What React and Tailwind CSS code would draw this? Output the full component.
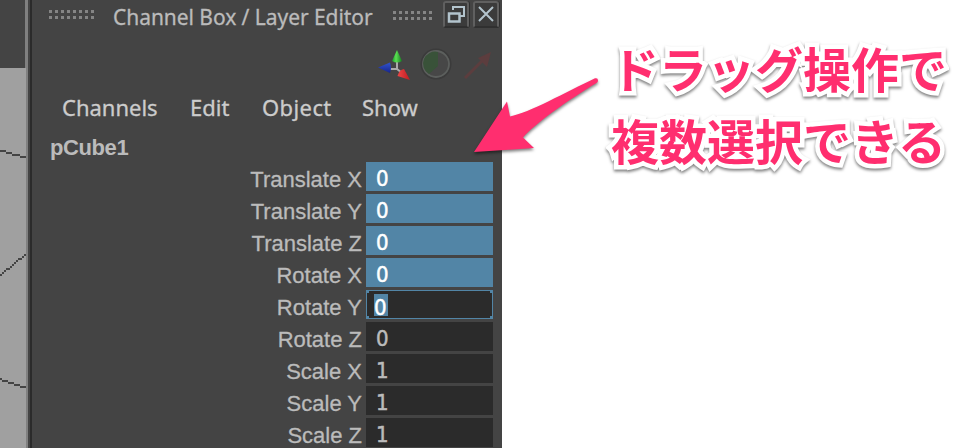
import React from "react";

const channels = [
  { label: "Translate X", value: "0", state: "selected" },
  { label: "Translate Y", value: "0", state: "selected" },
  { label: "Translate Z", value: "0", state: "selected" },
  { label: "Rotate X", value: "0", state: "selected" },
  { label: "Rotate Y", value: "0", state: "editing" },
  { label: "Rotate Z", value: "0", state: "idle" },
  { label: "Scale X", value: "1", state: "idle" },
  { label: "Scale Y", value: "1", state: "idle" },
  { label: "Scale Z", value: "1", state: "idle" },
];

function Grip({ columns }) {
  return (
    <div className="flex gap-[3px]">
      {Array.from({ length: columns }, (_, i) => (
        <div key={i} className="flex flex-col gap-[3px]">
          <i className="size-[3px] bg-[#858585]" />
          <i className="size-[3px] bg-[#858585]" />
        </div>
      ))}
    </div>
  );
}

function Viewport() {
  return (
    <div className="flex h-full w-[26px] shrink-0 flex-col">
      <div className="h-[68px] w-[25px] shrink-0 bg-[#444]" />
      <svg className="h-[380px] w-[26px] bg-[#a0a0a0]" viewBox="0 68 26 380" shapeRendering="crispEdges" fill="none" stroke="#444" strokeWidth="2">
        <path d="M0 151H6M6 153H12M12 155H20M20 157H26" />
        <path d="M0 275H2M2 273H4M4 271H6M6 269H10M10 267H12M12 265H14M14 263H16M16 261H18M18 259H22M22 257H24M24 255H26" />
        <path d="M0 379H2M2 381H8M8 383H14M14 385H20M20 387H26" />
      </svg>
    </div>
  );
}

function TitleButton({ children }) {
  return (
    <div className="h-[27px] w-[26px] rounded-[3px] border-2 border-[#606060] border-b-[#303030] bg-[#3b3b3b] shadow-[1px_0_0_#303030]">
      <svg className="size-[22px]" viewBox="0 0 22 22" fill="none" stroke="#b3c4cd">
        {children}
      </svg>
    </div>
  );
}

function TitleBar() {
  return (
    <div className="flex h-[34px] items-start">
      <div className="ml-[17px] mt-[10px]"><Grip columns={8} /></div>
      <h1 className="ml-[19px] mt-[2px] w-[261px] whitespace-nowrap text-[21px] leading-[30px] tracking-[-0.05px] text-[#bbb] [-webkit-text-stroke:0.3px_#bbb]">Channel Box / Layer Editor</h1>
      <div className="ml-[19px] mt-[11px]"><Grip columns={7} /></div>
      <div className="ml-[11px] mt-[1px] flex gap-1">
        <TitleButton>
          <path strokeWidth="2" d="M8 7V4H19V13H15" />
          <path strokeWidth="2.5" d="M4 10.5H14.5V18.5H4Z" />
        </TitleButton>
        <TitleButton>
          <path strokeWidth="2" d="M4 4L18 18M18 4L4 18" />
        </TitleButton>
      </div>
    </div>
  );
}

function ToolIcons() {
  return (
    <svg className="ml-[340px] h-[40px] w-[120px]" viewBox="372 44 120 40">
      <defs>
        <linearGradient id="green"><stop offset="0" stopColor="#17962a" /><stop offset=".4" stopColor="#5be052" /><stop offset="1" stopColor="#147a20" /></linearGradient>
        <linearGradient id="blue" x1="0" x2="0" y1="0" y2="1"><stop offset="0" stopColor="#3153cd" /><stop offset="1" stopColor="#17258a" /></linearGradient>
        <linearGradient id="red" x1="0" x2="1" y1="0" y2="0"><stop offset="0" stopColor="#ef4545" /><stop offset="1" stopColor="#bb1d22" /></linearGradient>
      </defs>
      <path d="M397 60V69H388M397 69L402 73" fill="none" stroke="#aaa" strokeWidth="2" />
      <path d="M397 50L402 61Q397 64 392 61Z" fill="url(#green)" />
      <path d="M378 67.5L390 62.5Q392 68 390 73Z" fill="url(#blue)" />
      <path d="M410 80L397.500 76Q399 70 404 69Z" fill="url(#red)" />
      <circle cx="436" cy="64" r="14.500" fill="none" stroke="#3b3b3b" strokeWidth="2" />
      <circle cx="436" cy="64" r="13" fill="#474747" stroke="#5c5f5d" strokeWidth="1.800" />
      <path d="M438 52V66L429 74A12 12 0 0 1 438 52Z" fill="#395239" />
      <path d="M465 78L485 58" stroke="#5c3d3e" strokeWidth="3" />
      <path d="M491 52L478 58L487 67Z" fill="#5c3d3e" />
    </svg>
  );
}

function ValueField({ value, state }) {
  if (state === "editing") {
    return (
      <div className="relative h-[29px] w-[127px] border border-[#5285a6] bg-[#2b2b2b] pl-[7px] pt-[3px] text-white">
        <i className="absolute left-0 top-0 size-[2px] bg-[#5285a6]" />
        <i className="absolute right-0 top-0 size-[2px] bg-[#5285a6]" />
        <i className="absolute bottom-0 left-0 size-[2px] bg-[#5285a6]" />
        <i className="absolute bottom-0 right-0 size-[2px] bg-[#5285a6]" />
        <span className="block h-[22px] w-[14px] bg-[#5285a6] leading-[27px]">{value}</span>
      </div>
    );
  }
  const tone = state === "selected" ? "bg-[#5285a6] text-white" : "bg-[#2b2b2b] text-[#bbb]";
  return <div className={"h-[29px] w-[127px] pl-[10px] leading-[33px] " + tone}>{value}</div>;
}

function ChannelRow({ label, value, state }) {
  return (
    <div className="flex h-[29px] shrink-0 justify-end gap-1">
      <span className="whitespace-nowrap font-['Liberation_Sans',sans-serif] text-[22px] leading-[35px] text-[#bbb] [-webkit-text-stroke:0.3px_#bbb]">{label}</span>
      <div className="font-['DejaVu_Sans_Condensed','DejaVu_Sans',sans-serif] text-[22px] [-webkit-text-stroke:0.5px_currentColor] [font-stretch:condensed]">
        <ValueField value={value} state={state} />
      </div>
    </div>
  );
}

function ChannelBox() {
  return (
    <section className="flex h-full w-[470px] shrink-0 flex-col overflow-hidden bg-[#444] font-['Noto_Sans',sans-serif]">
      <TitleBar />
      <div className="mt-[10px] h-[40px]"><ToolIcons /></div>
      <nav className="mt-[7px] flex h-[32px] pl-[30px] text-[22px] leading-[32px] text-[#ccc] [-webkit-text-stroke:0.3px_#ccc]">
        <span className="w-[128px]">Channels</span>
        <span className="w-[72px]">Edit</span>
        <span className="w-[100px] tracking-[0.4px]">Object</span>
        <span>Show</span>
      </nav>
      <h2 className="mt-[9px] h-[30px] pl-[18px] font-['Liberation_Sans',sans-serif] text-[22px] font-bold leading-[31px] tracking-[-0.4px] text-[#bbb]">pCube1</h2>
      <div className="flex flex-col gap-[3px] pr-[9px]">
        {channels.map((c) => <ChannelRow key={c.label} {...c} />)}
      </div>
    </section>
  );
}

export default function App() {
  return (
    <main className="relative flex h-[448px] w-[968px] overflow-hidden bg-white">
      <div className="flex h-full shrink-0 bg-[#808080]">
        <Viewport />
        <div className="w-[2px]" />
        <div className="w-[2px] bg-[#444]" />
        <div className="w-[2px] bg-[#2b2b2b]" />
      </div>
      <ChannelBox />
      <p className="ml-[109px] mt-[31px] whitespace-nowrap font-['Noto_Sans_CJK_JP',sans-serif] text-[48px] font-bold leading-[72px] text-[#ff2e6f] [-webkit-text-stroke:9px_white] [filter:drop-shadow(0_2px_1.5px_rgba(0,0,0,0.5))] [paint-order:stroke_fill] [stroke-linejoin:round]">
        ドラッグ操作で<br />複数選択できる
      </p>
      <svg className="absolute left-[465px] top-[70px] h-[95px] w-[145px] [filter:drop-shadow(0_2px_1.5px_rgba(0,0,0,0.5))]" viewBox="465 70 145 95">
        <path fill="#ff2e6f" d="M474 152L507 101.500L510 116.500C529 113 566 92 595 78.300Q598 77.500 598 80.500Q598 82 596.500 83C565 102 535 124 523 137.500L534 148Z" />
      </svg>
    </main>
  );
}
